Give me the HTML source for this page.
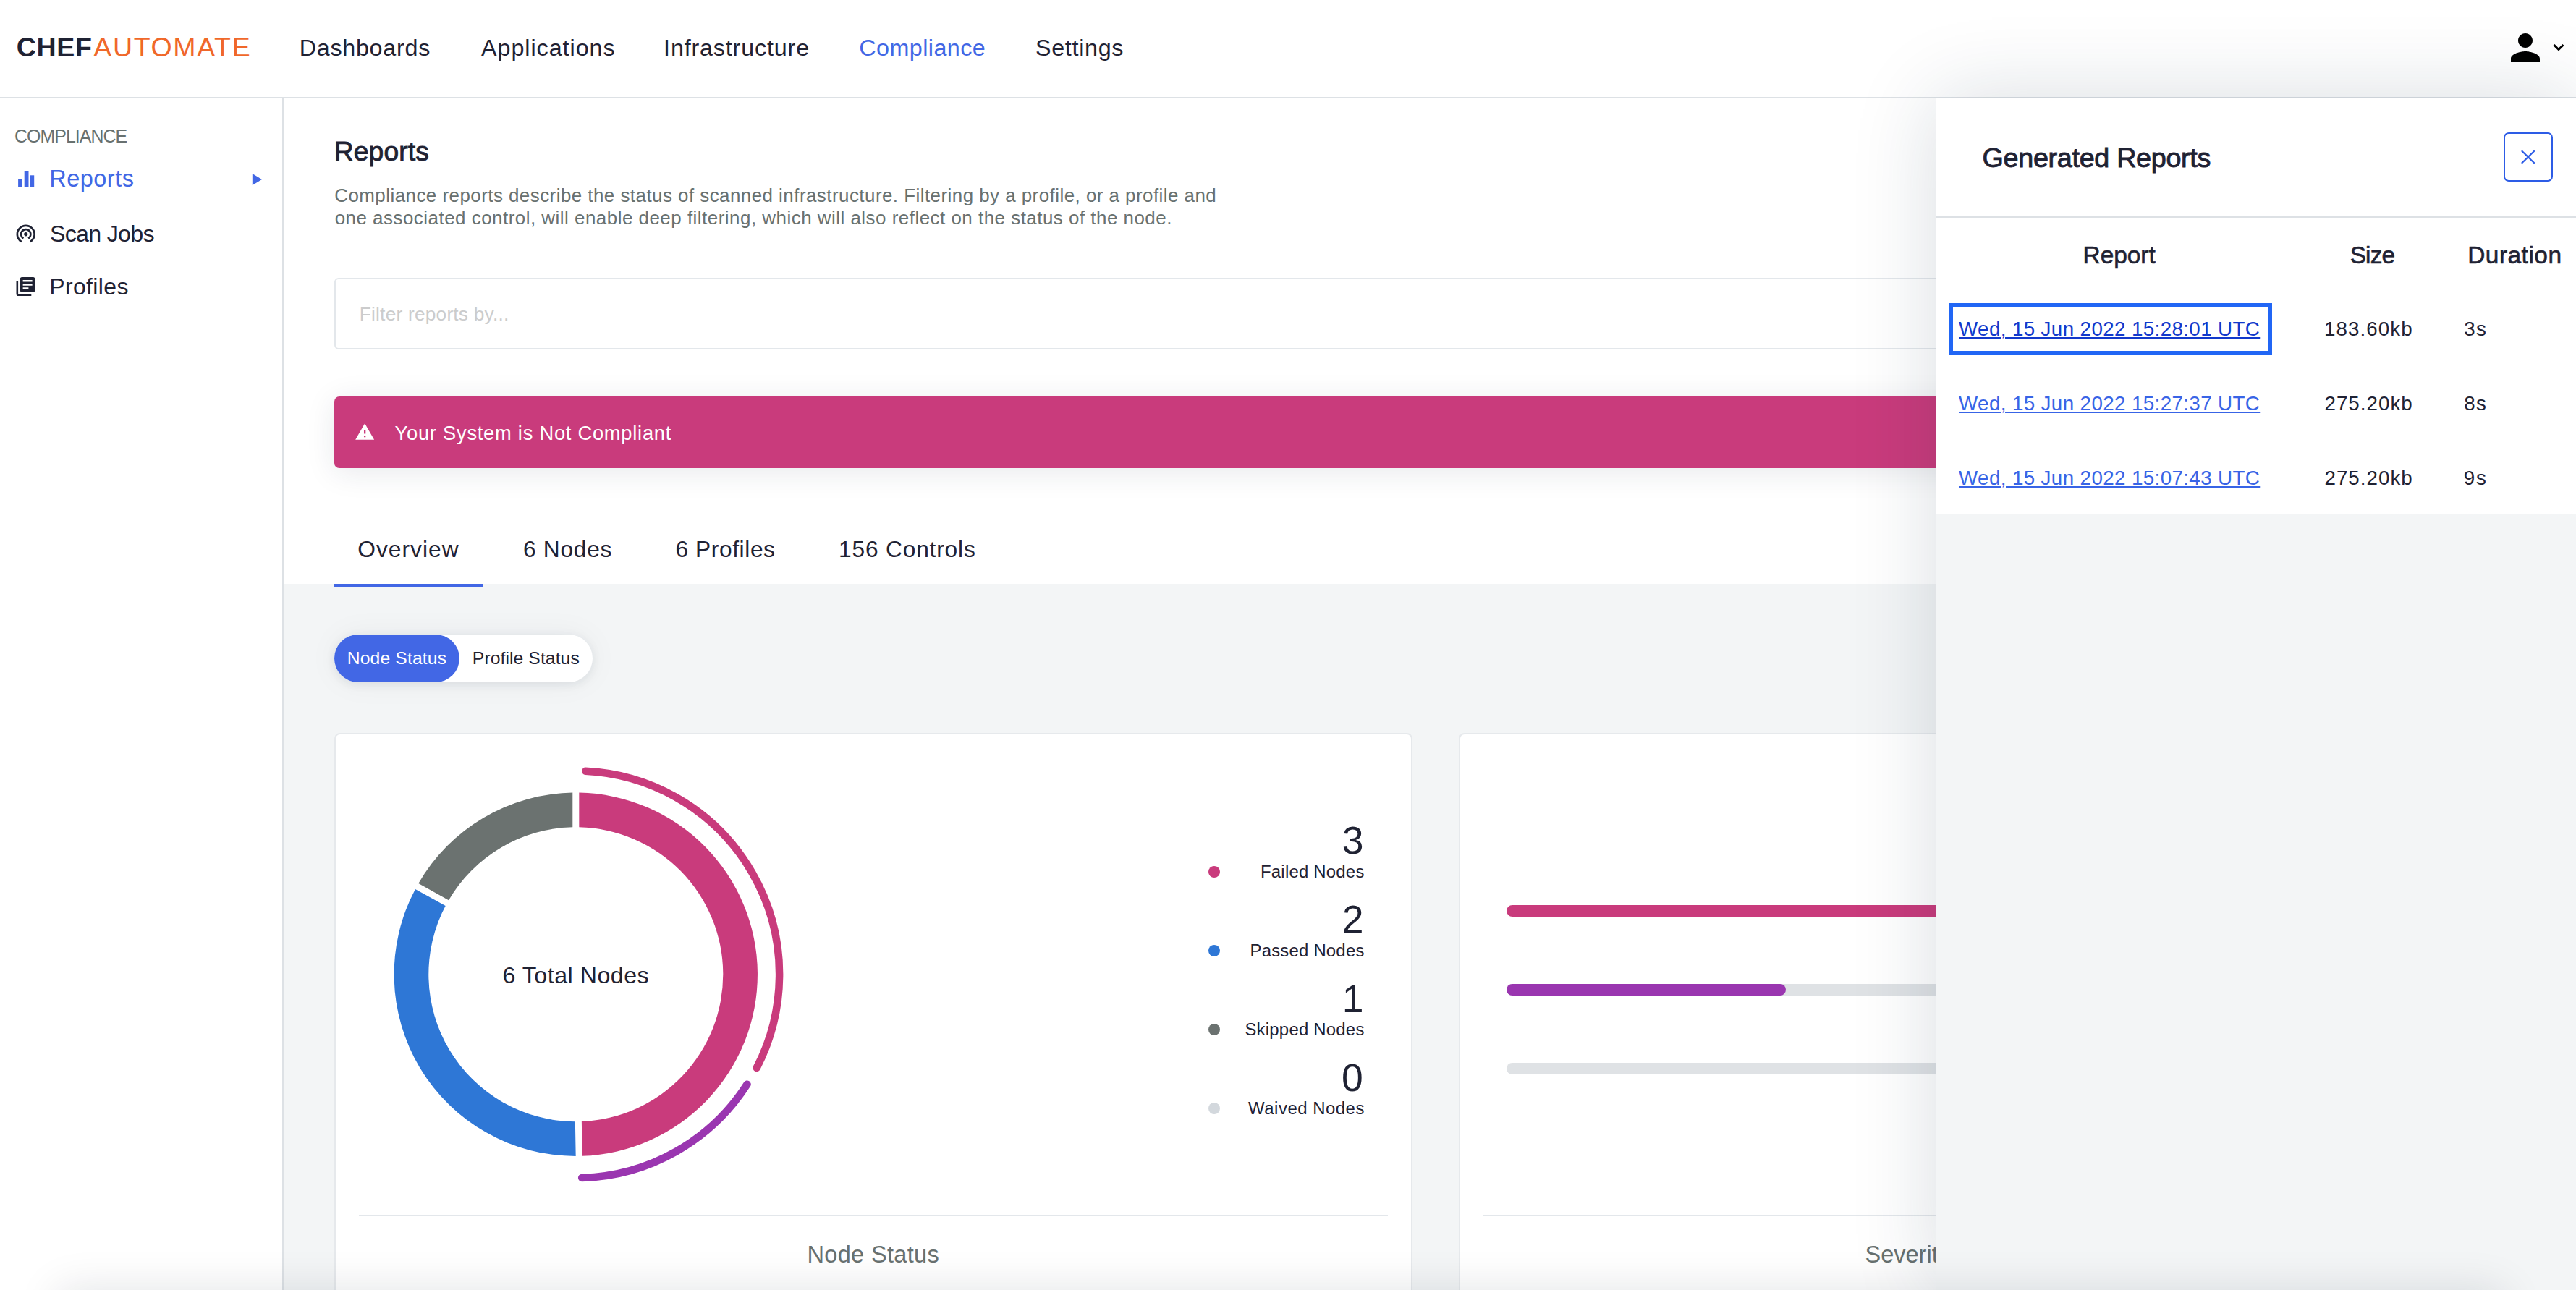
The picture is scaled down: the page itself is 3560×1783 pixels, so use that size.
<!DOCTYPE html>
<html><head><meta charset="utf-8">
<title>Chef Automate - Compliance Reports</title>
<style>
html,body{margin:0;padding:0;width:3560px;height:1783px;overflow:hidden;background:#fff;font-family:"Liberation Sans",sans-serif;}
.abs{position:absolute;}
.t{position:absolute;line-height:1;white-space:nowrap;}
</style></head><body>
<!-- main gray background below tab bar -->
<div class="abs" style="left:392px;top:807px;width:3168px;height:976px;background:#f3f5f6;z-index:1"></div>
<!-- header -->
<div class="abs" style="left:0;top:0;width:3560px;height:134px;background:#fff;border-bottom:2px solid #dde1e5;z-index:2"></div>
<!-- sidebar border -->
<div class="abs" style="left:390px;top:136px;width:2px;height:1647px;background:#dde1e5;z-index:2"></div>

<!-- header icons -->
<svg class="abs" style="left:3460px;top:36px;z-index:3" width="60" height="60" viewBox="0 0 24 24"><path fill="#000" d="M12 12c2.21 0 4-1.79 4-4s-1.79-4-4-4-4 1.79-4 4 1.79 4 4 4zm0 2c-2.67 0-8 1.34-8 4v2h16v-2c0-2.66-5.33-4-8-4z"/></svg>
<svg class="abs" style="left:3520px;top:50px;z-index:3" width="32" height="30" viewBox="0 0 32 30"><path d="M9.5 12 L16 18.5 L22.5 12" fill="none" stroke="#000" stroke-width="3"/></svg>

<!-- sidebar icons -->
<svg class="abs" style="left:0;top:200px;z-index:3" width="400" height="230" viewBox="0 200 400 230">
  <rect x="25.1" y="247" width="5.6" height="11" fill="#4267e5"/>
  <rect x="33.7" y="236" width="5.8" height="22" fill="#4267e5"/>
  <rect x="41.9" y="242.3" width="5.3" height="15.7" fill="#4267e5"/>
  <polygon points="348.8,240 362,248 348.8,256" fill="#4267e5"/>
  <g transform="translate(19.85,306.5) scale(1.325)"><path fill="#1f2233" d="M12 11c-1.1 0-2 .9-2 2s.9 2 2 2 2-.9 2-2-.9-2-2-2zm6 2c0-3.31-2.690-6-6-6s-6 2.69-6 6c0 2.22 1.21 4.15 3 5.19l1-1.74c-1.19-.7-2-1.970-2-3.45 0-2.21 1.79-4 4-4s4 1.79 4 4c0 1.48-.81 2.75-2 3.45l1 1.74c1.79-1.04 3-2.97 3-5.19zM12 3C6.48 3 2 7.48 2 13c0 3.7 2.01 6.92 4.99 8.65l1-1.73C5.61 18.53 4 15.96 4 13c0-4.42 3.58-8 8-8s8 3.58 8 8c0 2.96-1.61 5.53-4 6.92l1 1.73c2.99-1.73 5-4.95 5-8.65 0-5.52-4.48-10-10-10z"/></g>
  <g transform="translate(19.9,380.4) scale(1.3)"><path fill="#1f2233" d="M4 6H2v14c0 1.1.9 2 2 2h14v-2H4V6zm16-4H8c-1.1 0-2 .9-2 2v12c0 1.1.9 2 2 2h12c1.1 0 2-.9 2-2V4c0-1.1-.9-2-2-2zm-1 9H9V9h10v2zm-4 4H9v-2h6v2zm4-8H9V5h10v2z"/></g>
</svg>

<!-- filter input -->
<div class="abs" style="left:462px;top:384px;width:3024px;height:95px;border:2px solid #e3e7eb;border-radius:6px;background:#fff;z-index:3"></div>
<!-- banner -->
<div class="abs" style="left:462px;top:548px;width:3028px;height:99px;background:#c93b7c;border-radius:7px;box-shadow:0 6px 40px rgba(30,40,70,.10);z-index:3"></div>
<svg class="abs" style="left:489.8px;top:583.4px;z-index:4" width="30" height="27" viewBox="0 0 25.42 22.88"><path fill="#fff" d="M1 21h22L12 2 1 21zm12-3h-2v-2h2v2zm0-4h-2v-4h2v4z"/></svg>
<!-- tab underline -->
<div class="abs" style="left:462px;top:807px;width:205px;height:4px;background:#4267e5;z-index:3"></div>
<!-- toggle -->
<div class="abs" style="left:462px;top:877px;width:357px;height:66px;background:#fff;border-radius:33px;box-shadow:0 3px 14px rgba(20,40,60,.09), 0 0 44px rgba(20,40,60,.05);z-index:3"></div>
<div class="abs" style="left:462px;top:877px;width:173px;height:66px;background:#4267e5;border-radius:33px;z-index:3"></div>

<!-- card 1 -->
<div class="abs" style="left:462px;top:1013px;width:1486px;height:900px;background:#fff;border:2px solid #e6e9ec;border-radius:8px;z-index:3"></div>
<div class="abs" style="left:496px;top:1679px;width:1422px;height:2px;background:#e3e7eb;z-index:4"></div>
<!-- card 2 -->
<div class="abs" style="left:2016px;top:1013px;width:1486px;height:900px;background:#fff;border:2px solid #e6e9ec;border-radius:8px;z-index:3"></div>
<div class="abs" style="left:2050px;top:1679px;width:1422px;height:2px;background:#e3e7eb;z-index:4"></div>
<div class="abs" style="left:2081.7px;top:1250.6px;width:1360px;height:16px;background:#c93b7c;border-radius:8px;z-index:4"></div>
<div class="abs" style="left:2081.7px;top:1359.6px;width:1360px;height:16px;background:#dfe2e5;border-radius:8px;z-index:4"></div>
<div class="abs" style="left:2081.7px;top:1359.6px;width:386px;height:16px;background:#9a36b0;border-radius:8px;z-index:4"></div>
<div class="abs" style="left:2081.7px;top:1469.3px;width:1360px;height:16px;background:#dfe2e5;border-radius:8px;z-index:4"></div>

<!-- donut -->
<div class="abs" style="left:0;top:0;z-index:4"><svg class="abs" style="left:0;top:0" width="3560" height="1783" viewBox="0 0 3560 1783">
<path d="M800.30,1095.59 A251.2,251.2 0 0 1 804.68,1597.79 L803.85,1550.09 A203.5,203.5 0 0 0 800.30,1143.30 Z" fill="#c93b7c"/>
<path d="M795.68,1597.95 A251.2,251.2 0 0 1 573.95,1228.92 L615.68,1252.05 A203.5,203.5 0 0 0 794.85,1550.25 Z" fill="#2e77d6"/>
<path d="M578.31,1221.05 A251.2,251.2 0 0 1 791.30,1095.59 L791.30,1143.30 A203.5,203.5 0 0 0 620.04,1244.18 Z" fill="#6b7270"/>
<path d="M809.20,1065.77 A281.3,281.3 0 0 1 1045.66,1475.99" fill="none" stroke="#c93b7c" stroke-width="10.5" stroke-linecap="round"/>
<path d="M1032.54,1498.68 A281.3,281.3 0 0 1 804.15,1627.93" fill="none" stroke="#9a36b0" stroke-width="10.5" stroke-linecap="round"/>
</svg></div>
<!-- legend dots -->
<div class="abs" style="left:1670px;top:1196.8px;width:16px;height:16px;border-radius:50%;background:#c93b7c;z-index:4"></div>
<div class="abs" style="left:1670px;top:1305.8px;width:16px;height:16px;border-radius:50%;background:#2e77d6;z-index:4"></div>
<div class="abs" style="left:1670px;top:1414.9px;width:16px;height:16px;border-radius:50%;background:#6b7270;z-index:4"></div>
<div class="abs" style="left:1670px;top:1523.6px;width:16px;height:16px;border-radius:50%;background:#d3d8dd;z-index:4"></div>

<!-- drawer -->
<div class="abs" style="left:2676px;top:135px;width:884px;height:1648px;background:#f3f5f6;box-shadow:0 0 110px rgba(20,45,70,.16);z-index:10"></div>
<div class="abs" style="left:2676px;top:135px;width:884px;height:576px;background:#fff;z-index:11"></div>
<div class="abs" style="left:2676px;top:299px;width:884px;height:2px;background:#dde1e5;z-index:11"></div>
<div class="abs" style="left:3460px;top:183px;width:64px;height:64px;border:2px solid #2d5ce6;border-radius:7px;z-index:11"></div>
<svg class="abs" style="left:3470px;top:195px;z-index:12" width="50" height="50" viewBox="3470 195 50 50"><path d="M3485.6 209 L3502 225 M3502 209 L3485.6 225" stroke="#2d5ce6" stroke-width="2.2" stroke-linecap="square" fill="none"/></svg>
<div class="abs" style="left:2693px;top:419px;width:435px;height:60px;border:6px solid #2166f5;z-index:11"></div>

<div class="t" style="left:22.83px;top:47.10px;font-size:37.50px;color:#1f2233;z-index:5;font-weight:700;letter-spacing:0.672px;">CHEF</div>
<div class="t" style="left:129.30px;top:47.10px;font-size:37.50px;color:#f0682a;z-index:5;letter-spacing:1.643px;">AUTOMATE</div>
<div class="t" style="left:413.68px;top:49.58px;font-size:32.27px;color:#1f2233;z-index:5;letter-spacing:0.736px;">Dashboards</div>
<div class="t" style="left:665.00px;top:49.58px;font-size:32.27px;color:#1f2233;z-index:5;letter-spacing:0.964px;">Applications</div>
<div class="t" style="left:917.08px;top:49.58px;font-size:32.27px;color:#1f2233;z-index:5;letter-spacing:0.840px;">Infrastructure</div>
<div class="t" style="left:1187.29px;top:49.58px;font-size:32.27px;color:#4267e5;z-index:5;letter-spacing:0.459px;">Compliance</div>
<div class="t" style="left:1430.99px;top:49.58px;font-size:32.27px;color:#1f2233;z-index:5;letter-spacing:0.702px;">Settings</div>
<div class="t" style="left:20.03px;top:176.91px;font-size:24.85px;color:#687170;z-index:5;letter-spacing:-0.915px;">COMPLIANCE</div>
<div class="t" style="left:68.37px;top:231.49px;font-size:32.37px;color:#4267e5;z-index:5;letter-spacing:0.531px;">Reports</div>
<div class="t" style="left:68.89px;top:306.65px;font-size:32.24px;color:#1f2233;z-index:5;letter-spacing:-0.718px;">Scan Jobs</div>
<div class="t" style="left:68.30px;top:380.84px;font-size:31.96px;color:#1f2233;z-index:5;letter-spacing:0.362px;">Profiles</div>
<div class="t" style="left:461.74px;top:190.95px;font-size:37.19px;color:#1f2233;z-index:5;letter-spacing:0.175px;-webkit-text-stroke:0.9px #1f2233;">Reports</div>
<div class="t" style="left:462.28px;top:258.00px;font-size:25.92px;color:#687170;z-index:5;letter-spacing:0.469px;">Compliance reports describe the status of scanned infrastructure. Filtering by a profile, or a profile and</div>
<div class="t" style="left:462.69px;top:289.45px;font-size:25.92px;color:#687170;z-index:5;letter-spacing:0.502px;">one associated control, will enable deep filtering, which will also reflect on the status of the node.</div>
<div class="t" style="left:496.75px;top:420.86px;font-size:26.26px;color:#cbcccd;z-index:5;letter-spacing:0.225px;">Filter reports by...</div>
<div class="t" style="left:545.57px;top:584.69px;font-size:27.29px;color:#ffffff;z-index:5;letter-spacing:0.756px;">Your System is Not Compliant</div>
<div class="t" style="left:494.31px;top:744.05px;font-size:31.71px;color:#1f2233;z-index:5;letter-spacing:1.022px;">Overview</div>
<div class="t" style="left:722.91px;top:744.05px;font-size:31.71px;color:#1f2233;z-index:5;letter-spacing:0.730px;">6 Nodes</div>
<div class="t" style="left:933.51px;top:744.05px;font-size:31.71px;color:#1f2233;z-index:5;letter-spacing:0.589px;">6 Profiles</div>
<div class="t" style="left:1159.02px;top:744.05px;font-size:31.71px;color:#1f2233;z-index:5;letter-spacing:0.817px;">156 Controls</div>
<div class="t" style="left:479.67px;top:898.13px;font-size:24.71px;color:#ffffff;z-index:5;letter-spacing:0.138px;">Node Status</div>
<div class="t" style="left:652.87px;top:898.13px;font-size:24.71px;color:#1f2233;z-index:5;letter-spacing:0.074px;">Profile Status</div>
<div class="t" style="left:694.49px;top:1331.70px;font-size:32.13px;color:#1f2233;z-index:5;letter-spacing:0.522px;">6 Total Nodes</div>
<div class="t" style="left:1854.72px;top:1135.31px;font-size:53.49px;color:#1f2233;z-index:5;">3</div>
<div class="t" style="left:1854.72px;top:1244.41px;font-size:53.49px;color:#1f2233;z-index:5;">2</div>
<div class="t" style="left:1854.72px;top:1353.51px;font-size:53.49px;color:#1f2233;z-index:5;">1</div>
<div class="t" style="left:1853.88px;top:1462.61px;font-size:53.49px;color:#1f2233;z-index:5;">0</div>
<div class="t" style="left:1742.03px;top:1192.56px;font-size:23.91px;color:#1f2233;z-index:5;letter-spacing:0.224px;">Failed Nodes</div>
<div class="t" style="left:1727.53px;top:1301.66px;font-size:23.91px;color:#1f2233;z-index:5;letter-spacing:0.213px;">Passed Nodes</div>
<div class="t" style="left:1720.45px;top:1410.76px;font-size:23.91px;color:#1f2233;z-index:5;letter-spacing:0.230px;">Skipped Nodes</div>
<div class="t" style="left:1725.10px;top:1519.86px;font-size:23.91px;color:#1f2233;z-index:5;letter-spacing:0.516px;">Waived Nodes</div>
<div class="t" style="left:1115.46px;top:1718.34px;font-size:32.52px;color:#687170;z-index:5;letter-spacing:0.340px;">Node Status</div>
<div class="t" style="left:2577.48px;top:1718.34px;font-size:32.52px;color:#687170;z-index:5;">Severity of Node Failures</div>
<div class="t" style="left:2739.58px;top:199.65px;font-size:37.74px;color:#1f2233;z-index:12;letter-spacing:-0.319px;-webkit-text-stroke:0.9px #1f2233;">Generated Reports</div>
<div class="t" style="left:2878.59px;top:336.18px;font-size:33.44px;color:#1f2233;z-index:12;letter-spacing:-0.037px;-webkit-text-stroke:0.6px #1f2233;">Report</div>
<div class="t" style="left:3247.75px;top:336.18px;font-size:33.44px;color:#1f2233;z-index:12;letter-spacing:-0.920px;-webkit-text-stroke:0.6px #1f2233;">Size</div>
<div class="t" style="left:3410.19px;top:336.18px;font-size:33.44px;color:#1f2233;z-index:12;letter-spacing:0.497px;-webkit-text-stroke:0.6px #1f2233;">Duration</div>
<div class="t" style="left:2707.00px;top:441.31px;font-size:27.74px;color:#1239cc;z-index:12;letter-spacing:0.388px;text-decoration:underline;text-underline-offset:2px;text-decoration-thickness:2px;">Wed, 15 Jun 2022 15:28:01 UTC</div>
<div class="t" style="left:3212.07px;top:441.31px;font-size:27.74px;color:#1f2233;z-index:12;letter-spacing:1.072px;">183.60kb</div>
<div class="t" style="left:3405.13px;top:441.31px;font-size:27.74px;color:#1f2233;z-index:12;letter-spacing:1.434px;">3s</div>
<div class="t" style="left:2707.00px;top:543.96px;font-size:27.74px;color:#3864e6;z-index:12;letter-spacing:0.388px;text-decoration:underline;text-underline-offset:2px;text-decoration-thickness:2px;">Wed, 15 Jun 2022 15:27:37 UTC</div>
<div class="t" style="left:3212.50px;top:543.96px;font-size:27.74px;color:#1f2233;z-index:12;letter-spacing:1.010px;">275.20kb</div>
<div class="t" style="left:3405.13px;top:543.96px;font-size:27.74px;color:#1f2233;z-index:12;letter-spacing:1.434px;">8s</div>
<div class="t" style="left:2707.00px;top:646.61px;font-size:27.74px;color:#3864e6;z-index:12;letter-spacing:0.388px;text-decoration:underline;text-underline-offset:2px;text-decoration-thickness:2px;">Wed, 15 Jun 2022 15:07:43 UTC</div>
<div class="t" style="left:3212.50px;top:646.61px;font-size:27.74px;color:#1f2233;z-index:12;letter-spacing:1.010px;">275.20kb</div>
<div class="t" style="left:3404.70px;top:646.61px;font-size:27.74px;color:#1f2233;z-index:12;letter-spacing:1.867px;">9s</div>

<!-- bottom viewport shadow -->
<div class="abs" style="left:80px;top:1783px;width:3380px;height:100px;background:#fff;box-shadow:0 0 60px rgba(20,25,40,.12);z-index:30"></div>
</body></html>
